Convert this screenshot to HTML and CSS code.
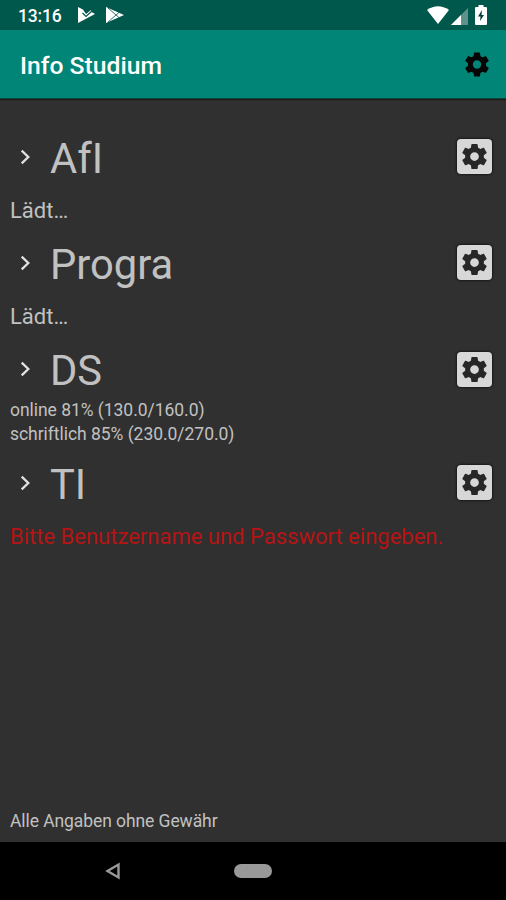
FILE: index.html
```
<!DOCTYPE html>
<html lang="de">
<head>
<meta charset="utf-8">
<title>Info Studium</title>
<link rel="stylesheet" href="styles.css">
</head>
<body>
<svg class="defs" aria-hidden="true">
  <symbol id="gear" viewBox="2 2 20 20"><path fill-rule="evenodd" d="M19.43 12.98c.04-.32.07-.64.07-.98s-.03-.66-.07-.98l2.11-1.65c.19-.15.24-.42.12-.64l-2-3.46c-.12-.22-.39-.3-.61-.22l-2.49 1c-.52-.4-1.080-.73-1.690-.98l-.38-2.650C14.460 2.180 14.250 2 14 2h-4c-.25 0-.46.18-.49.42l-.38 2.650c-.61.25-1.170.59-1.690.98l-2.490-1c-.23-.09-.49 0-.61.22l-2 3.460c-.13.22-.07.49.12.64l2.110 1.650c-.04.32-.07.65-.07.98s.03.66.07.98l-2.110 1.650c-.19.15-.24.42-.12.64l2 3.460c.12.22.39.3.61.22l2.490-1c.52.4 1.080.73 1.690.98l.38 2.650c.03.24.24.42.49.42h4c.25 0 .46-.18.49-.42l.38-2.650c.61-.25 1.170-.59 1.690-.98l2.490 1c.23.09.49 0 .61-.22l2-3.460c.12-.22.07-.49-.12-.64zM12 15.500a3.500 3.500 0 1 1 0-7 3.500 3.500 0 0 1 0 7z"/></symbol>
  <symbol id="chevron" viewBox="0 0 10 16"><path d="M1.700 1.700 8.300 8l-6.600 6.300" fill="none" stroke="#e2e2e2" stroke-width="2.300"/></symbol>
</svg>
<div class="screen">
  <div class="status">
    <span class="clock">13:16</span>
    <svg class="note" viewBox="0 0 17 18"><path d="M0 1l5 2.500L8 8l5-4 .5 2 3.500 2L0 17z" fill="#fff"/><path d="M4.500 7 8 10.500l6.500-6" fill="none" stroke="#00574b" stroke-width="1.200"/></svg>
    <svg class="note play" viewBox="0 0 18 18"><path d="M0 1l18 8L0 17z" fill="#fff"/><path d="M2 2l11 9.500M2 16l11-9.500" fill="none" stroke="#00574b" stroke-width=".8"/></svg>
    <div class="signals">
      <svg width="22" height="18" viewBox="0 0 22 18"><path d="M0 4Q11-3.500 22 4L11 18z" fill="#fff"/></svg>
      <svg class="cell" width="17" height="17" viewBox="0 0 17 17"><path d="M0 17 17 0v17z" fill="#5d918a"/><path d="M0 17 10 7v10z" fill="#fff"/></svg>
      <svg width="12" height="20" viewBox="0 0 12 20"><path d="M3.500 2V0h5v2H11q1 0 1 1v16q0 1-1 1H1q-1 0-1-1V3q0-1 1-1z" fill="#fff"/><path d="M7 5 3 11.500H5.500L5 16l4-6H6.500z" fill="#003f37"/></svg>
    </div>
  </div>
  <header class="appbar">
    <h1>Info Studium</h1>
    <svg class="settings"><use href="#gear"/></svg>
  </header>
  <main>
    <section>
      <div class="row"><svg class="chev"><use href="#chevron"/></svg><h2>AfI</h2><button aria-label="Einstellungen"><svg><use href="#gear"/></svg></button></div>
      <p class="message">Lädt…</p>
    </section>
    <section>
      <div class="row"><svg class="chev"><use href="#chevron"/></svg><h2>Progra</h2><button aria-label="Einstellungen"><svg><use href="#gear"/></svg></button></div>
      <p class="message">Lädt…</p>
    </section>
    <section>
      <div class="row"><svg class="chev"><use href="#chevron"/></svg><h2>DS</h2><button aria-label="Einstellungen"><svg><use href="#gear"/></svg></button></div>
      <div class="scores"><p>online 81% (130.0/160.0)</p><p>schriftlich 85% (230.0/270.0)</p></div>
    </section>
    <section>
      <div class="row"><svg class="chev"><use href="#chevron"/></svg><h2>TI</h2><button aria-label="Einstellungen"><svg><use href="#gear"/></svg></button></div>
      <p class="message error">Bitte Benutzername und Passwort eingeben.</p>
    </section>
    <footer>Alle Angaben ohne Gewähr</footer>
  </main>
  <nav>
    <svg class="back" width="16" height="18" viewBox="0 0 16 18"><path d="M13.500 2.500v13L2.500 9z" fill="none" stroke="#999" stroke-width="2.400"/></svg>
    <span class="home"></span>
  </nav>
</div>
</body>
</html>
```
FILE: styles.css
```
* { box-sizing: border-box; }
body, h1, h2, p { margin: 0; }
body { background: #303030; font-family: Roboto, sans-serif; color: #c1c1c1; }
.defs { position: absolute; width: 0; height: 0; }
svg { display: block; flex: none; }
.screen { width: 506px; height: 900px; display: flex; flex-direction: column; overflow: hidden; }
.status { height: 30px; flex: none; display: flex; align-items: center; padding: 0 19px 0 18px; background: #00574b; color: #fff; }
.clock { width: 60px; font-size: 17.500px; letter-spacing: -.2px; font-weight: 500; line-height: 30px; padding-top: 2px; }
.note { width: 17px; height: 18px; }
.play { width: 18px; margin-left: 11px; }
.signals { margin-left: auto; display: flex; align-items: center; }
.cell { margin: 2px 7px 0 2px; }
.appbar { height: 69px; flex: none; display: flex; align-items: center; justify-content: space-between; padding: 0 17px 0 20px; background: #008577; border-bottom: 1px solid #0b4740; box-shadow: 0 1px 1px #1c1917; color: #fff; }
h1 { font-size: 24.700px; font-weight: 500; line-height: 40px; padding-top: 3px; }
.settings { width: 24px; height: 25px; fill: #050505; }
main { flex: 1; display: flex; flex-direction: column; padding: 31px 14px 0 10px; }
section { height: 106.400px; flex: none; }
section:nth-of-type(3) { height: 113.500px; }
.row { height: 56px; display: flex; align-items: center; padding-left: 10px; }
.chev { width: 10px; height: 16px; margin-top: -3px; }
h2 { font-size: 41.700px; font-weight: 400; line-height: 56px; margin-left: 20px; padding-top: 1px; }
button { width: 35px; height: 35px; margin: -3px 0 0 auto; padding: 5px; border: 0; border-radius: 4px; background: #d7d7d7; box-shadow: 0 0 2px 1px #191919; }
button svg { width: 25px; height: 25px; fill: #272727; }
.message { font-size: 22px; line-height: 50px; white-space: nowrap; }
.error { color: #b61414; }
.scores { font-size: 17.500px; letter-spacing: -.04px; line-height: 24px; margin-top: -1px; }
footer { margin-top: auto; padding-bottom: 9px; font-size: 17.500px; letter-spacing: -.08px; line-height: 24px; }
nav { height: 58px; flex: none; display: flex; align-items: center; background: #000; padding-left: 105px; }
.home { width: 38px; height: 14px; border-radius: 7px; background: #999; margin-left: 113px; }
```
